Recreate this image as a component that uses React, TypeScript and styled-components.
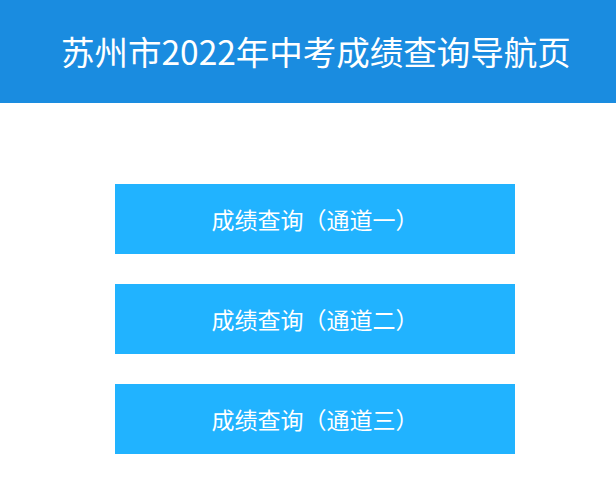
import styled, { createGlobalStyle } from "styled-components";

const GlobalStyle = createGlobalStyle`
  body {
    margin: 0;
    background: #fff;
    font-family: "Microsoft YaHei", "Noto Sans CJK SC", sans-serif;
  }
`;

const Header = styled.header`
  height: 103px;
  background-color: #1a8ce0;
  display: flex;
  align-items: center;
  padding-left: 61px;
`;

const Title = styled.h1`
  margin: 0 0 2px;
  color: #fff;
  font-size: 33.5px;
  font-weight: 400;
  line-height: 1;
`;

const Channels = styled.nav`
  display: flex;
  flex-direction: column;
  align-items: center;
  gap: 30px;
  padding: 81px 0 0 14px;
`;

const ChannelLink = styled.a`
  width: 400px;
  height: 70px;
  display: flex;
  align-items: center;
  justify-content: center;
  background-color: #21b3ff;
  color: #fff;
  font-size: 23px;
  text-decoration: none;
  cursor: pointer;
`;

const channels = ["一", "二", "三"];

export default function App() {
  return (
    <>
      <GlobalStyle />
      <Header>
        <Title>苏州市2022年中考成绩查询导航页</Title>
      </Header>
      <Channels>
        {channels.map((n) => (
          <ChannelLink key={n} href="#">
            成绩查询（通道{n}）
          </ChannelLink>
        ))}
      </Channels>
    </>
  );
}
